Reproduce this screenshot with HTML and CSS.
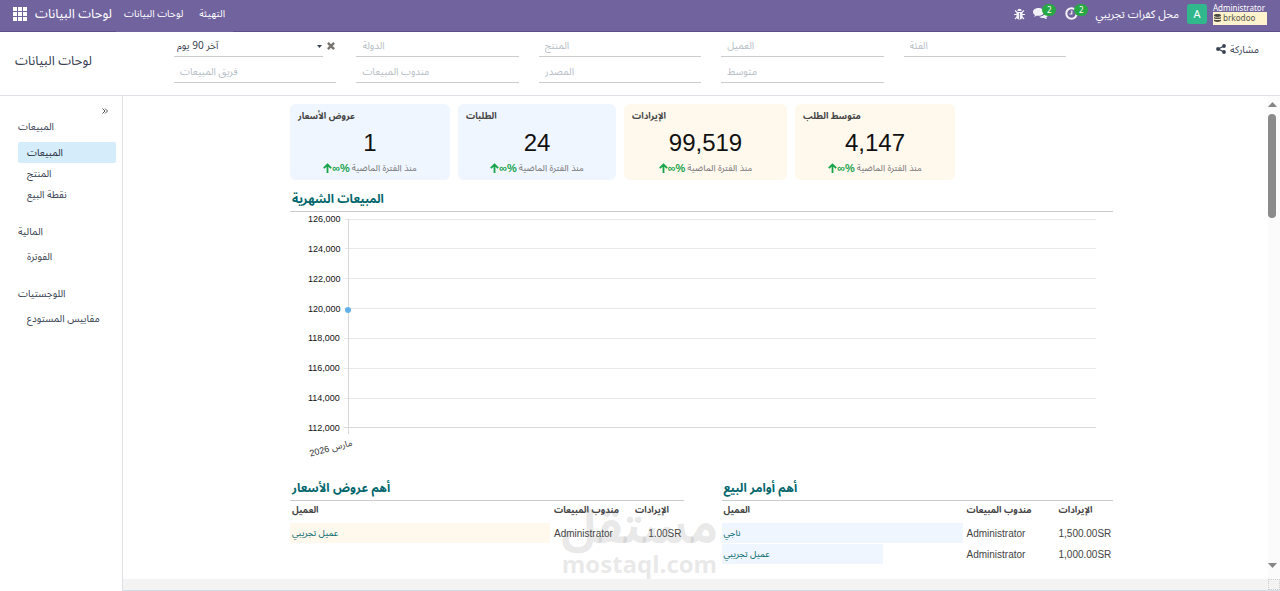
FILE: index.html
```html
<!DOCTYPE html>
<html lang="ar">
<head>
<meta charset="utf-8">
<title>لوحات البيانات</title>
<link rel="stylesheet" href="styles.css">
</head>
<body>
<header class="navbar">
  <button class="apps" aria-label="التطبيقات">
    <svg width="14" height="14" viewBox="0 0 14 14"><path fill="#fff" d="M0 0h4v4H0zM5 0h4v4H5zM10 0h4v4h-4zM0 5h4v4H0zM5 5h4v4H5zM10 5h4v4h-4zM0 10h4v4H0zM5 10h4v4H5zM10 10h4v4h-4z"/></svg>
  </button>
  <a class="brand" href="#">لوحات البيانات</a>
  <nav class="menu"><a href="#">لوحات البيانات</a><a href="#">التهيئة</a></nav>
  <div class="systray">
    <button class="tray" aria-label="Debug">
      <svg width="11" height="12" viewBox="0 0 11 12"><g fill="none" stroke="#f3f1f8" stroke-width="1.2"><path d="M0 6.5h11M1 2.5l2.5 2.200M10 2.500 7.500 4.700M1 11l2.500-2.500M10 11 7.500 8.500"/></g><path fill="#f3f1f8" d="M3.300 3a2.200 2.200 0 0 1 4.400 0zM2.500 4h6v4.500a3 3 0 0 1-6 0z"/><path stroke="#71639e" stroke-width=".8" d="M5.500 5v6"/></svg>
    </button>
    <button class="tray" aria-label="المحادثات">
      <svg width="15" height="13" viewBox="0 0 15 13"><path fill="#f3f1f8" d="M5.500 1C2.500 1 0 2.700 0 4.900c0 1.300.8 2.300 2 3-.1.600-.6 1.300-1.100 1.800 1.300 0 2.300-.6 3-1.200.5.100 1 .2 1.600.2 3 0 5.500-1.700 5.500-3.800S8.500 1 5.500 1z"/><path fill="#f3f1f8" d="M12 5.300c0 2.500-2.600 4.400-5.900 4.500 1 .8 2.300 1.200 3.700 1.200.5 0 1 0 1.400-.1.700.6 1.600 1.100 2.900 1.100-.5-.5-.9-1-1-1.600 1.100-.6 1.800-1.500 1.800-2.500 0-1.200-1.200-2.200-2.900-2.600z"/></svg>
      <span class="badge">2</span>
    </button>
    <button class="tray" aria-label="الأنشطة">
      <svg width="13" height="13" viewBox="0 0 13 13"><circle cx="6.500" cy="6.500" r="5.200" fill="none" stroke="#f3f1f8" stroke-width="2"/><path fill="none" stroke="#f3f1f8" stroke-width="1.200" d="M6.800 3.500V7H4.500"/></svg>
      <span class="badge">2</span>
    </button>
    <button class="company">محل كفرات تجريبي</button>
    <button class="user">
      <span class="avatar">A</span>
      <span class="who"><span class="name">Administrator</span><span class="db"><svg width="7" height="8" viewBox="0 0 7 8"><path fill="#4b4a45" d="M0 1.200C0 .5 1.600 0 3.500 0S7 .5 7 1.200v.6C7 2.500 5.400 3 3.500 3S0 2.500 0 1.800zM0 3c1 .8 6 .8 7 0v1.300c0 .9-7 .9-7 0zM0 5.400c1 .8 6 .8 7 0v1.400C7 8.300 0 8.300 0 6.800z"/></svg>brkodoo</span></span>
    </button>
  </div>
</header>

<section class="panel">
  <h1 class="page-title">لوحات البيانات</h1>
  <div class="filters">
    <div class="period">
      <select class="period-select" aria-label="الفترة"><option>آخر 90 يوم</option></select>
      <button class="clear" aria-label="مسح"><svg width="8" height="8" viewBox="0 0 8 8"><path stroke="#77736f" stroke-width="2.400" d="M.9.900l6.200 6.200M7.100.9.900 7.100"/></svg></button>
    </div>
    <input class="filter" placeholder="الدولة" aria-label="الدولة">
    <input class="filter" placeholder="المنتج" aria-label="المنتج">
    <input class="filter" placeholder="العميل" aria-label="العميل">
    <input class="filter" placeholder="الفئة" aria-label="الفئة">
    <input class="filter" placeholder="فريق المبيعات" aria-label="فريق المبيعات">
    <input class="filter" placeholder="مندوب المبيعات" aria-label="مندوب المبيعات">
    <input class="filter" placeholder="المصدر" aria-label="المصدر">
    <input class="filter" placeholder="متوسط" aria-label="متوسط">
  </div>
  <div class="actions">
    <button class="share"><svg width="10" height="10" viewBox="0 0 10 10"><path fill="none" stroke="#374151" stroke-width="1.300" d="M8 2 2.200 5 8 8"/><g fill="#374151"><circle cx="8" cy="2" r="1.900"/><circle cx="2" cy="5" r="1.900"/><circle cx="8" cy="8" r="1.900"/></g></svg>مشاركة</button>
  </div>
</section>

<div class="body">
  <aside class="sidebar">
    <button class="collapse" aria-label="طي"><svg width="6" height="6" viewBox="0 0 6 6"><path fill="none" stroke="#555" d="M.5.500 3 3 .5 5.500M3 .5 5.500 3 3 5.500"/></svg></button>
    <section class="group"><h2>المبيعات</h2><a class="active" href="#">المبيعات</a><a href="#">المنتج</a><a href="#">نقطة البيع</a></section>
    <section class="group"><h2>المالية</h2><a href="#">الفوترة</a></section>
    <section class="group"><h2>اللوجستيات</h2><a href="#">مقاييس المستودع</a></section>
  </aside>

  <main class="sheet">
    <div class="content">
      <div class="cards">
        <article class="card blue"><h3>عروض الأسعار</h3><p class="value">1</p><p class="trend"><svg width="9" height="10" viewBox="0 0 9 10"><path fill="none" stroke="#16a34a" stroke-width="1.800" d="M4.500 10V1.500M.8 5.200l3.700-3.700 3.700 3.700"/></svg><bdi class="up">∞%</bdi><span>منذ الفترة الماضية</span></p></article>
        <article class="card blue"><h3>الطلبات</h3><p class="value">24</p><p class="trend"><svg width="9" height="10" viewBox="0 0 9 10"><path fill="none" stroke="#16a34a" stroke-width="1.800" d="M4.500 10V1.500M.8 5.200l3.700-3.700 3.700 3.700"/></svg><bdi class="up">∞%</bdi><span>منذ الفترة الماضية</span></p></article>
        <article class="card cream"><h3>الإيرادات</h3><p class="value">99,519</p><p class="trend"><svg width="9" height="10" viewBox="0 0 9 10"><path fill="none" stroke="#16a34a" stroke-width="1.800" d="M4.500 10V1.500M.8 5.200l3.700-3.700 3.700 3.700"/></svg><bdi class="up">∞%</bdi><span>منذ الفترة الماضية</span></p></article>
        <article class="card cream"><h3>متوسط الطلب</h3><p class="value">4,147</p><p class="trend"><svg width="9" height="10" viewBox="0 0 9 10"><path fill="none" stroke="#16a34a" stroke-width="1.800" d="M4.500 10V1.500M.8 5.200l3.700-3.700 3.700 3.700"/></svg><bdi class="up">∞%</bdi><span>منذ الفترة الماضية</span></p></article>
      </div>

      <h2 class="heading">المبيعات الشهرية</h2>
      <div class="chart">
        <ul class="axis">
          <li>126,000</li><li>124,000</li><li>122,000</li><li>120,000</li><li>118,000</li><li>116,000</li><li>114,000</li><li>112,000</li>
        </ul>
        <span class="axis-line"></span>
        <span class="point"></span>
        <span class="month">مارس 2026</span>
      </div>

      <div class="tables">
        <section>
          <h2 class="heading">أهم عروض الأسعار</h2>
          <table class="list quotes">
            <thead><tr><th class="c1">العميل</th><th class="c2">مندوب المبيعات</th><th class="c3">الإيرادات</th></tr></thead>
            <tbody><tr><td><div class="bar cream" style="width:100%">عميل تجريبي</div></td><td>Administrator</td><td class="num">1.00SR</td></tr></tbody>
          </table>
        </section>
        <section>
          <h2 class="heading">أهم أوامر البيع</h2>
          <table class="list orders">
            <thead><tr><th class="c1">العميل</th><th class="c2">مندوب المبيعات</th><th class="c3">الإيرادات</th></tr></thead>
            <tbody>
              <tr><td><div class="bar blue" style="width:100%">ناجي</div></td><td>Administrator</td><td class="num">1,500.00SR</td></tr>
              <tr><td><div class="bar blue" style="width:67%">عميل تجريبي</div></td><td>Administrator</td><td class="num">1,000.00SR</td></tr>
            </tbody>
          </table>
        </section>
      </div>
    </div>
    <div class="watermark"><span class="wm-ar">مستقل</span><span class="wm-en">mostaql.com</span></div>
  </main>

  <div class="scroll">
    <svg width="9" height="5" viewBox="0 0 9 5"><path fill="#858585" d="M4.500 0 9 5H0z"/></svg>
    <span class="thumb"></span>
    <svg width="9" height="5" viewBox="0 0 9 5"><path fill="#858585" d="M0 0h9L4.500 5z"/></svg>
  </div>
  <div class="scroll-x"><span class="corner"></span></div>
</div>
</body>
</html>
```
FILE: styles.css
```css
* { box-sizing: border-box; }
body { margin: 0; min-height: 100vh; display: flex; flex-direction: column; background: #fff; color: #374151; font-family: "Noto Sans", "Noto Sans Arabic", "DejaVu Sans", sans-serif; font-size: 10px; }
a { color: inherit; text-decoration: none; }
button, input, select { font: inherit; color: inherit; border: 0; padding: 0; margin: 0; background: none; border-radius: 0; }
h1, h2, h3, p, ul { margin: 0; padding: 0; font-weight: 400; list-style: none; }
svg { display: block; flex: none; }

.navbar { display: flex; align-items: center; height: 32px; padding: 0 13px 4px; background: #71639e; border-bottom: 1px solid #5c4f86; color: #fff; white-space: nowrap; line-height: 27px; }
.brand { font-size: 13px; margin: 0 4px 0 8px; }
.menu { display: flex; height: 32px; margin-bottom: -5px; background: #71639e; }
.menu a { padding: 0 8px; }
.systray { display: flex; align-items: center; margin-left: auto; gap: 8px; }
.tray { position: relative; display: flex; margin-right: 9px; }
.tray:first-child { margin-right: 0; }
.badge { position: absolute; left: 9px; top: -3px; width: 14px; height: 12px; border-radius: 6px; background: #28a745; font-size: 8px; line-height: 12px; text-align: center; }
.company { font-size: 11px; }
.user { display: flex; align-items: center; gap: 6px; }
.avatar { width: 20px; height: 20px; border-radius: 3px; background: #30b88c; line-height: 20px; font-size: 11px; }
.who { display: flex; flex-direction: column; width: 54px; text-align: left; }
.name { font-size: 8px; line-height: 9px; }
.db { display: flex; align-items: center; gap: 2px; height: 13px; padding-left: 1px; background: #fff3cd; color: #57544a; font-family: "DejaVu Sans", sans-serif; font-size: 8px; line-height: 13px; }

.panel { display: flex; height: 64px; border-bottom: 1px solid #dee2e6; }
.page-title { width: 174px; padding-left: 15px; font-size: 13px; line-height: 57px; white-space: nowrap; }
.filters { flex: 1; display: grid; grid-template-columns: repeat(5, 1fr); column-gap: 20px; grid-auto-rows: 26px; align-content: start; }
.filter { min-width: 0; height: 25px; border-bottom: 1px solid #ccc; padding: 1px 6px 0; }
.filter::placeholder { color: #b6bec5; opacity: 1; }
.period { display: flex; height: 25px; min-width: 0; }
.period-select { appearance: none; flex: 1; min-width: 0; padding: 1px 3px 0; border-bottom: 1px solid #ccc; background: url("data:image/svg+xml,%3Csvg xmlns='http://www.w3.org/2000/svg' width='5' height='3'%3E%3Cpath d='M0 0h5L2.5 3z' fill='%23374151'/%3E%3C/svg%3E") no-repeat right 1px top 13px; }
.clear { width: 13px; padding: 3px 0 0 4px; }
.actions { width: 214px; display: flex; justify-content: flex-end; padding-right: 21px; }
.share { display: flex; align-items: center; gap: 4px; height: 34px; }

.body { flex: 1; display: grid; grid-template-columns: 123px 1fr 12px; grid-template-rows: 1fr 12px; }
.sidebar { grid-row: 1 / 3; border-right: 1px solid #dee2e6; padding: 12px 6px 0 18px; }
.collapse { display: block; margin: 0 8px 0 auto; }
.group { margin-bottom: 14px; }
.group h2 { font-size: 10px; line-height: 24px; margin-bottom: 3px; }
.collapse + .group h2 { margin-bottom: 4px; }
.group a { display: block; padding-left: 9px; line-height: 21px; white-space: nowrap; }
.group .active { background: #d5edfa; border-radius: 2px; color: #1f2937; }

.sheet { position: relative; font-family: "Liberation Sans", "Noto Sans Arabic", "Noto Sans", sans-serif; min-width: 0; padding: 8px 0 0 12px; }
.content { max-width: 823px; margin: 0 auto; }
.cards { display: grid; grid-template-columns: 160px 158px 163px 160px; gap: 8px; height: 76px; }
.card { border-radius: 6px; padding: 5px 8px; }
.blue { background: #eff6ff; }
.cream { background: #fff8ed; }
.card h3 { font-size: 9px; font-weight: 700; line-height: 14px; color: #434343; }
.value { font-size: 24px; line-height: 40px; text-align: center; color: #111; }
.trend { display: flex; align-items: center; justify-content: center; line-height: 8px; font-size: 9px; color: #757575; white-space: nowrap; }
.up { color: #16a34a; font-size: 11px; font-weight: 700; margin-right: 2px; }
.heading { font-size: 12px; font-weight: 700; line-height: 24px; color: #01666b; border-bottom: 1px solid #ccc; padding-left: 2px; }
.cards + .heading { margin-top: 7px; }
.chart { position: relative; height: 264px; padding: 1px 17px 0 0; }
.axis { display: flex; flex-direction: column; justify-content: space-between; height: 221px; }
.axis li { display: flex; align-items: center; gap: 4px; height: 12px; padding-left: 18px; font-size: 9px; line-height: 12px; color: #111; }
.axis li::after { content: ""; flex: 1; height: 1px; background: #e8e8e8; }
.axis li:last-child::after { background: #d8d8d8; }
.axis-line { position: absolute; left: 58px; top: 7px; width: 1px; height: 215px; background: #d8d8d8; }
.point { position: absolute; left: 55px; top: 95px; width: 6px; height: 6px; border-radius: 50%; background: #63b0e8; }
.month { position: absolute; left: 19px; top: 230px; font-size: 9px; line-height: 12px; color: #333; transform: rotate(-15deg); white-space: nowrap; }
.tables { display: grid; grid-template-columns: 393fr 391fr; gap: 38px; }
.list { width: 100%; border-collapse: collapse; table-layout: fixed; font-size: 10px; color: #434343; white-space: nowrap; }
.list th { text-align: left; font-size: 9px; font-weight: 700; height: 21px; line-height: 14px; padding: 0 2px 3px; }
.list td { height: 21px; padding: 1px 2px 0; }
.list td:first-child { padding: 0 2px 0 0; }
.list .bar { height: 20px; line-height: 20px; padding-left: 2px; font-size: 9px; color: #01666b; }
.quotes .c1 { width: 262px; }
.quotes .c2 { width: 81px; }
.orders .c1 { width: 243px; }
.orders .c2 { width: 92px; }
.list .num { text-align: right; }
.watermark { position: absolute; left: 438px; top: 409px; width: 157px; display: flex; flex-direction: column; align-items: center; color: rgba(120, 120, 120, .18); font-weight: 700; pointer-events: none; }
.wm-ar { font-size: 47px; line-height: 46px; font-family: "Noto Sans Arabic", "Noto Sans", sans-serif; }
.wm-en { font-size: 24px; line-height: 26px; font-family: "Open Sans", sans-serif; }

.scroll { display: flex; flex-direction: column; padding: 6px 3px 11px 0; background: #fbfbfb; }
.thumb { width: 8px; height: 104px; margin: 7px 0 auto; border-radius: 4px; background: #8b8b8b; }
.scroll-x { grid-column: 2 / 4; display: flex; justify-content: flex-end; background: #f3f3f3; border-bottom: 1px solid #d3dde6; }
.corner { width: 12px; border: 1px dotted #ccc; }
```
